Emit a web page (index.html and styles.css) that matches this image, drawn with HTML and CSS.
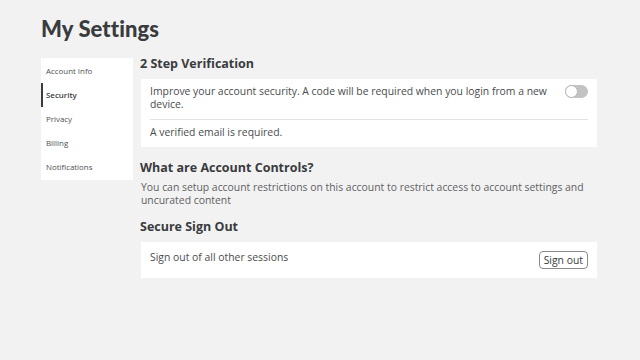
FILE: index.html
```html
<!DOCTYPE html>
<html lang="en">
<head>
<meta charset="utf-8">
<title>My Settings</title>
<link rel="stylesheet" href="styles.css">
</head>
<body>
<div class="page">
  <h1 class="title">My Settings</h1>
  <div class="layout">
    <nav class="sidebar">
      <div class="nav-item">Account Info</div>
      <div class="nav-item active">Security</div>
      <div class="nav-item">Privacy</div>
      <div class="nav-item">Billing</div>
      <div class="nav-item">Notifications</div>
    </nav>
    <main class="content">
      <h2 class="section-title">2 Step Verification</h2>
      <div class="card">
        <div class="row row-toggle">
          <span class="text">Improve your account security. A code will be required when you login from a new device.</span>
          <span class="toggle"><span class="knob"></span></span>
        </div>
        <div class="divider"></div>
        <div class="row">
          <span class="text">A verified email is required.</span>
        </div>
      </div>
      <h2 class="section-title spaced">What are Account Controls?</h2>
      <p class="para">You can setup account restrictions on this account to restrict access to account settings and uncurated content</p>
      <h2 class="section-title spaced2">Secure Sign Out</h2>
      <div class="card signout">
        <span class="text">Sign out of all other sessions</span>
        <button class="btn">Sign out</button>
      </div>
    </main>
  </div>
</div>
</body>
</html>
```
FILE: styles.css
```css
html, body {
  margin: 0;
  padding: 0;
  background: #f2f2f3;
}
body {
  font-family: "Open Sans", "Noto Sans", sans-serif;
  color: #393b3d;
  width: 640px;
  height: 360px;
  overflow: hidden;
}
.page {
  padding: 14px 43px 0 41px;
}
.title {
  margin: 0;
  font-family: Lato, "Open Sans", sans-serif;
  font-size: 22px;
  line-height: 30px;
  font-weight: 900;
  color: #393b3d;
  letter-spacing: 0.1px;
}
.layout {
  display: flex;
  gap: 8px;
  margin-top: 14px;
  align-items: flex-start;
}
.sidebar {
  width: 92px;
  background: #fff;
  padding: 1px 0;
  flex: none;
}
.nav-item {
  height: 24px;
  line-height: 24px;
  padding-left: 5px;
  font-size: 7.9px;
  font-weight: 500;
  color: #4f5154;
}
.nav-item.active {
  border-left: 2px solid #393b3d;
  padding-left: 3px;
  font-weight: 600;
  color: #393b3d;
}
.content {
  flex: 1;
  margin-top: -2px;
}
.section-title {
  margin: 0 0 7px -1px;
  font-size: 12.5px;
  line-height: 16px;
  font-weight: 700;
  color: #393b3d;
}
.section-title.spaced {
  margin-top: 13px;
  margin-bottom: 5px;
}
.section-title.spaced2 {
  margin-top: 12px;
}
.card {
  background: #fff;
  padding: 0 9px;
}
.row {
  padding: 6px 0 8px;
  display: flex;
  justify-content: space-between;
  align-items: flex-start;
  gap: 12px;
}
.text {
  font-size: 10.4px;
  line-height: 13px;
  color: #4a4c4e;
}
.row-toggle .text {
  max-width: 408px;
}
.divider {
  height: 1px;
  background: #e3e3e3;
}
.toggle {
  flex: none;
  width: 23px;
  height: 13px;
  border-radius: 7px;
  background: #c3c3c4;
  display: flex;
  align-items: center;
}
.knob {
  width: 13px;
  height: 13px;
  border-radius: 50%;
  background: #fff;
  box-sizing: border-box;
  border: 1px solid #b5b5b6;
}
.para {
  margin: 0;
  font-size: 10.4px;
  line-height: 13px;
  color: #606162;
}
.signout {
  display: flex;
  justify-content: space-between;
  align-items: flex-start;
  padding: 9px;
}
.btn {
  font-family: inherit;
  font-size: 10.4px;
  line-height: 13px;
  height: 18px;
  padding: 0 4px;
  border: 1px solid #8a8b8c;
  border-radius: 4px;
  background: #fff;
  color: #393b3d;
}
```
